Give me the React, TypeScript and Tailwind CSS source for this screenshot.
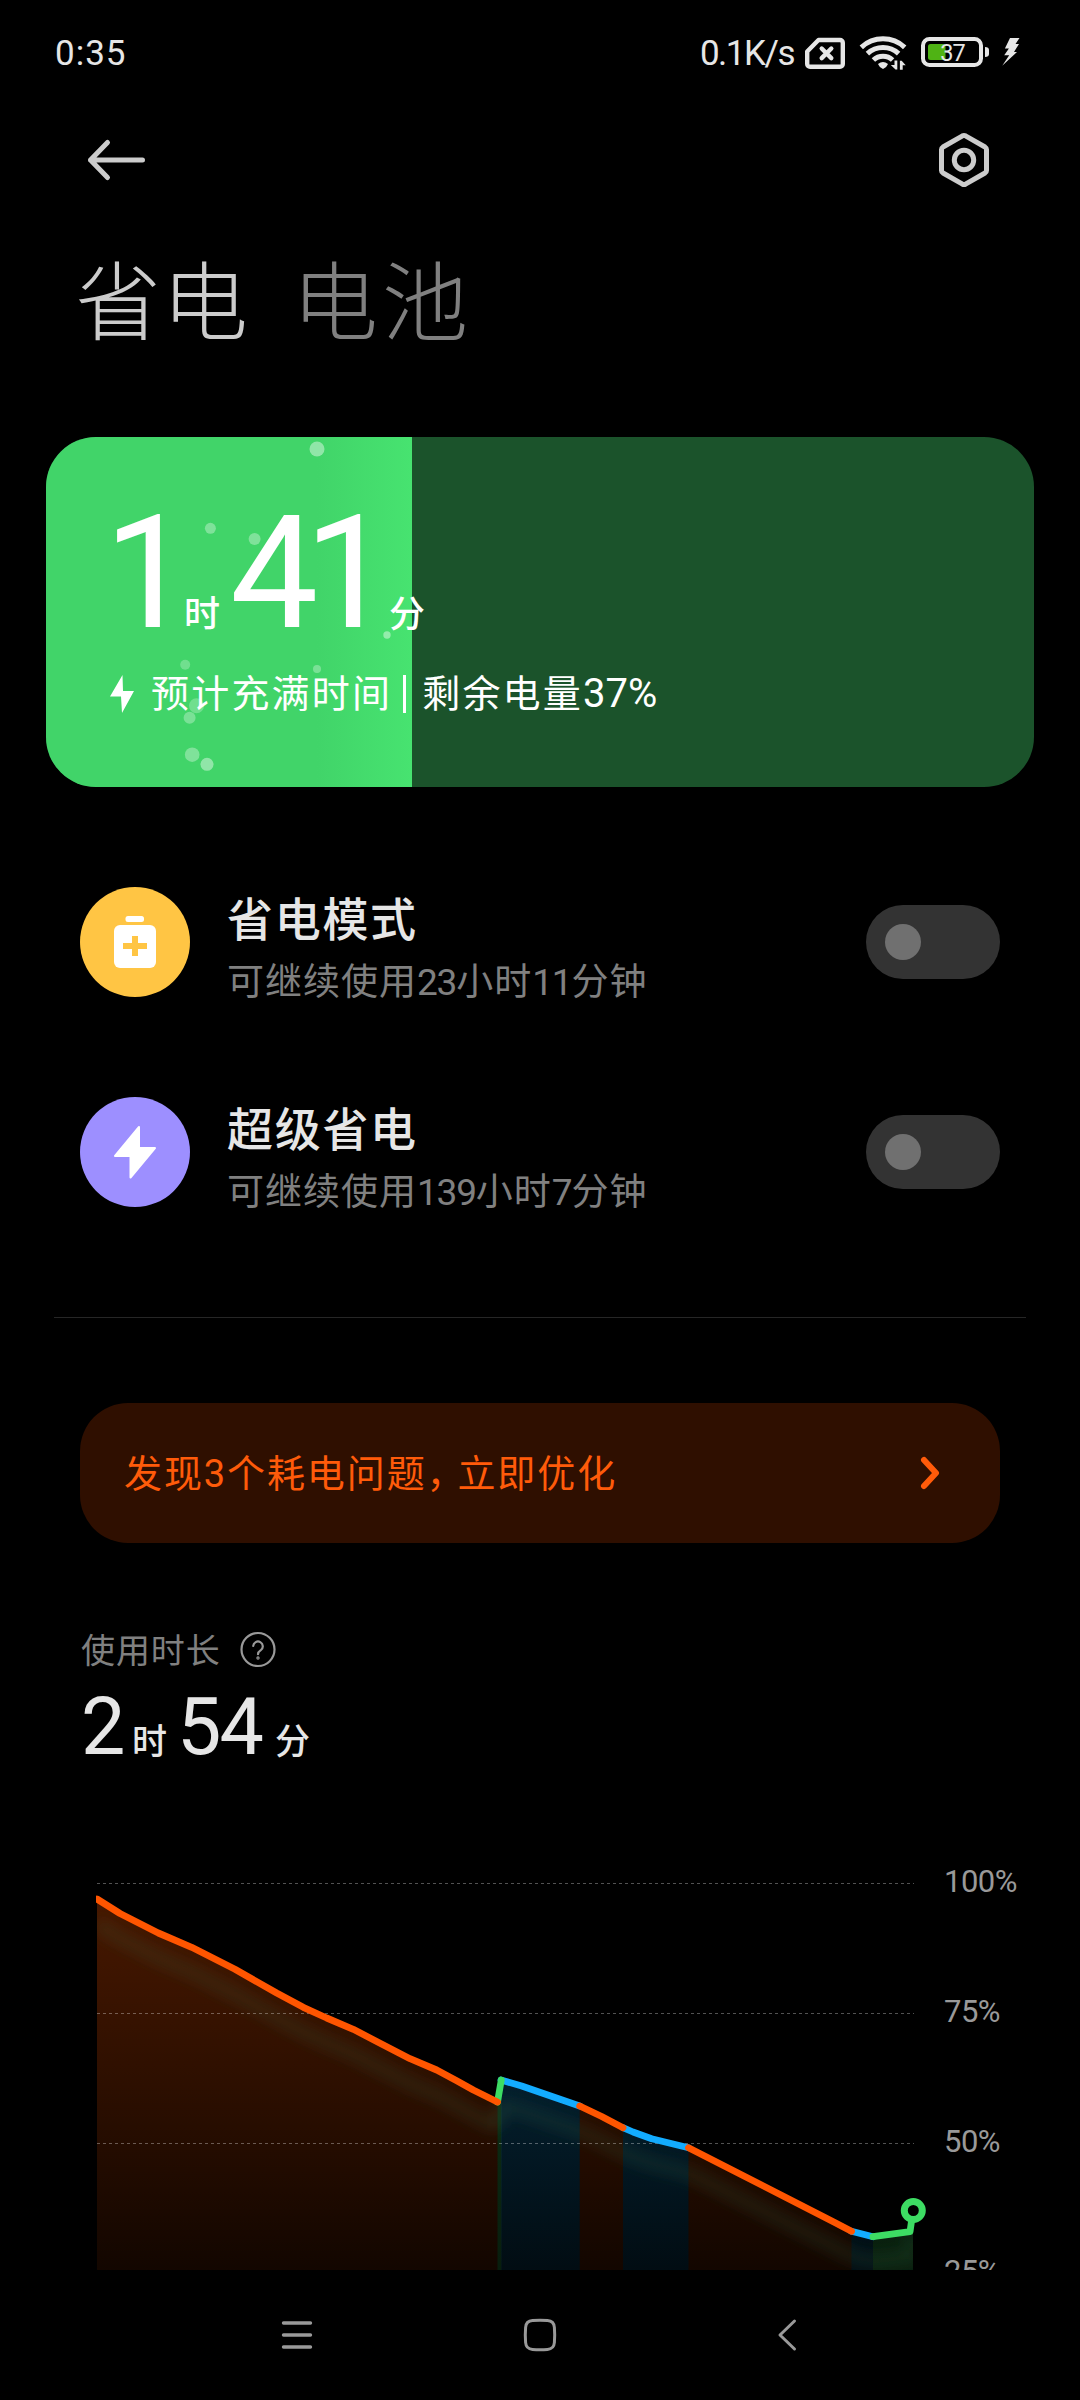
import React from 'react';

type Kind = 'drain' | 'idle' | 'charge';

interface Segment {
  kind: Kind;
  points: [number, number][];
}

const COLORS: Record<Kind, string> = {
  drain: '#ff5500',
  idle: '#13acff',
  charge: '#3ddc63',
};

const SEGMENTS: Segment[] = [
  { kind: 'idle', points: [[501, 2080], [521.7, 2086], [579.7, 2106]] },
  { kind: 'idle', points: [[623, 2127.7], [633, 2132], [651.7, 2138.7], [688.5, 2147.7]] },
  { kind: 'idle', points: [[851.5, 2231.3], [873, 2236.7]] },
  { kind: 'charge', points: [[497.5, 2102], [501.3, 2080]] },
  {
    kind: 'drain',
    points: [
      [97, 1899], [120, 1913.5], [158.3, 1933], [191.7, 1947.3], [235, 1969.3], [276.7, 1993],
      [303.3, 2007.3], [326.7, 2018], [353.3, 2029.3], [376.7, 2041.5], [410, 2058.7],
      [436.7, 2070], [456.7, 2080.7], [473.3, 2090], [497.5, 2102],
    ],
  },
  { kind: 'drain', points: [[579.7, 2106], [601.7, 2116.5], [623, 2127.7]] },
  { kind: 'drain', points: [[688.5, 2147.7], [833.3, 2221.7], [851.5, 2231.3]] },
  { kind: 'charge', points: [[873, 2236.7], [910, 2231.7], [913, 2211]] },
];

const BUBBLES = [
  { x: 271, y: 12, r: 7.5, o: 0.42 },
  { x: 164.4, y: 91.3, r: 5.5, o: 0.33 },
  { x: 208.6, y: 102, r: 6, o: 0.33 },
  { x: 341, y: 198, r: 3.7, o: 0.42 },
  { x: 139.2, y: 227.7, r: 5, o: 0.25 },
  { x: 271, y: 232, r: 4, o: 0.3 },
  { x: 150.5, y: 268.7, r: 7.5, o: 0.25 },
  { x: 143.6, y: 280.7, r: 6, o: 0.3 },
  { x: 146.2, y: 317.7, r: 7.3, o: 0.33 },
  { x: 161, y: 327.3, r: 6.5, o: 0.42 },
];

const toLine = (points: [number, number][]) => points.map((p) => p.join(',')).join(' ');

const toArea = (points: [number, number][]) =>
  `${points[0][0]},2403 ${toLine(points)} ${points[points.length - 1][0]},2403`;

const StatusBar: React.FC = () => (
  <div className="flex h-[105px] items-center pl-[55px] pr-[57px] text-[#e6e6e6]">
    <span className="pt-[2px] text-[35px] leading-none tracking-[1px]">0:35</span>
    <span className="ml-auto pt-[2px] text-[35px] leading-none tracking-[-1.500px]">0.1K/s</span>
    <svg className="ml-[9px] h-[105px] w-[220px]" viewBox="803 0 220 105" fill="none">
      {/* SIM missing */}
      <path d="M818.5 40H840a2.8 2.8 0 0 1 2.8 2.8V64a2.8 2.8 0 0 1-2.8 2.8h-30a2.8 2.8 0 0 1-2.8-2.8V51.5z" stroke="currentColor" strokeWidth="4.4" strokeLinejoin="round" />
      <path d="M821.7 48.5l9.6 9.6m0-9.6l-9.6 9.6" stroke="currentColor" strokeWidth="4.4" strokeLinecap="round" />
      {/* Wi-Fi */}
      <g stroke="currentColor" strokeWidth="5">
        <path d="M861.3 47.3a32 32 0 0 1 43.4 0" />
        <path d="M867.4 53.7a23 23 0 0 1 31.2 0" />
        <path d="M873.4 60a14 14 0 0 1 19.2 0" />
      </g>
      <path d="M878 64q5-4 10 0q-1 3-5 5q-4-2-5-5z" fill="currentColor" />
      <path d="M897.300 60.500v9h-1.800l-4.700-4.500h3.700v-4.500zM899.900 69.800v-9h1.800l4 4.500h-3v4.500z" fill="currentColor" />
      {/* Battery */}
      <rect x="923" y="39" width="58" height="26" rx="6.500" stroke="currentColor" strokeWidth="4" />
      <rect x="928" y="44" width="17.500" height="16" rx="2.500" fill="#4fb314" />
      <path d="M985 47q4 0 4 3v4q0 3-4 3z" fill="currentColor" />
      <text x="940.300" y="61" fill="currentColor" fontSize="23.500" letterSpacing="-1">37</text>
      <path d="M1010 38h9.500l-4 6h3.500l-5 8h3l-14.800 13.700l7-10.400h-5l4.700-6.800h-4z" fill="currentColor" />
    </svg>
  </div>
);

const Hero: React.FC = () => (
  <section className="relative mx-[46px] h-[350px] shrink-0 overflow-hidden rounded-[50px] bg-[#1b532b] text-white">
    <div className="absolute inset-y-0 left-0 w-[37%] bg-[linear-gradient(90deg,#41d469_74%,#47e370_100%)]" />
    <svg className="absolute inset-0" width="988" height="350">
      {BUBBLES.map((b, i) => (
        <circle key={i} cx={b.x} cy={b.y} r={b.r} fill="white" opacity={b.o} />
      ))}
    </svg>
    <div className="relative pl-[58px] pt-[55px]">
      <div className="flex h-[162px] items-baseline leading-[162px]">
        <span className="w-[80px] text-[157px] tracking-[-9px]">1</span>
        <span className="w-[46px] text-[36px] font-medium">时</span>
        <span className="w-[159px] text-[157px] tracking-[-14px]">41</span>
        <span className="text-[36px] font-medium">分</span>
      </div>
      <div className="mt-[10px] flex h-[60px] items-center pl-[6px]">
        <svg width="24" height="38" viewBox="0 0 24 38" fill="currentColor">
          <path d="M12.500 0L0 21.500h11L12 38l12-22H13z" />
        </svg>
        <span className="ml-[17px] text-[38px] tracking-[2.200px]">预计充满时间</span>
        <span className="ml-[11px] h-[38px] w-[3px] bg-white" />
        <span className="ml-[16px] text-[38px] tracking-[2.200px]">剩余电量</span>
        <span className="text-[40px]">37%</span>
      </div>
    </div>
  </section>
);

interface ModeRowProps {
  title: string;
  detail: string;
  badgeClass: string;
  icon: React.ReactNode;
}

const ModeRow: React.FC<ModeRowProps> = ({ title, detail, badgeClass, icon }) => (
  <div className="flex h-[110px] items-center px-20">
    <div className={`h-[110px] w-[110px] shrink-0 rounded-full ${badgeClass}`}>{icon}</div>
    <div className="ml-[37px] flex-1 pt-[17px]">
      <div className="h-[63px] text-[46px] font-medium leading-[62px] tracking-[1.700px] text-[#e6e6e6]">{title}</div>
      <div className="h-[61px] text-[37px] leading-[61px] tracking-[1px] text-[#808080]">
        {detail.split(/(\d+)/).map((part, i) => (
          <span key={i} className={i % 2 ? 'tracking-[-1.200px]' : ''}>{part}</span>
        ))}
      </div>
    </div>
    <button className="flex h-[74px] w-[134px] items-center rounded-full bg-[#333333] pl-[19px]">
      <span className="h-9 w-9 rounded-full bg-[#707070]" />
    </button>
  </div>
);

const Chart: React.FC = () => (
  <svg className="block shrink-0" width="1080" height="430" viewBox="0 1840 1080 430">
    <defs>
      {(Object.keys(COLORS) as Kind[]).map((kind) => (
        <linearGradient key={kind} id={kind} gradientUnits="userSpaceOnUse" x1="0" x2="0" y1="1899" y2="2403">
          <stop offset="0" stopColor={COLORS[kind]} stopOpacity="0.28" />
          <stop offset="1" stopColor={COLORS[kind]} stopOpacity={kind === 'charge' ? 0.08 : 0} />
        </linearGradient>
      ))}
      <filter id="glow" filterUnits="userSpaceOnUse" x="60" y="1840" width="900" height="470">
        <feGaussianBlur stdDeviation="6.500" />
      </filter>
      <clipPath id="area">
        {SEGMENTS.map((s, i) => <polygon key={i} points={toArea(s.points)} />)}
      </clipPath>
    </defs>
    {SEGMENTS.map((s, i) => <polygon key={i} points={toArea(s.points)} fill={`url(#${s.kind})`} />)}
    <g clipPath="url(#area)">
      <g filter="url(#glow)" transform="translate(0 25)" fill="none" stroke="#406e46" strokeOpacity="0.17" strokeWidth="15">
        {SEGMENTS.map((s, i) => <polyline key={i} points={toLine(s.points)} />)}
      </g>
    </g>
    {[1883.5, 2013.5, 2143.5].map((y) => (
      <line key={y} x1="97" x2="914" y1={y} y2={y} stroke="white" strokeOpacity="0.32" strokeDasharray="3 3" />
    ))}
    <g fill="none" strokeWidth="6.800" strokeLinecap="round" strokeLinejoin="round">
      {SEGMENTS.map((s, i) => <polyline key={i} points={toLine(s.points)} stroke={COLORS[s.kind]} />)}
    </g>
    <rect x="88" y="1885" width="8" height="30" fill="black" />
    <circle cx="913.300" cy="2210.500" r="9" fill="black" stroke="#3ddc63" strokeWidth="7" />
    <g fill="#999999" fontSize="31" letterSpacing="-0.500">
      <text x="944" y="1892">100%</text>
      <text x="944" y="2022">75%</text>
      <text x="944" y="2152">50%</text>
      <text x="944" y="2282">25%</text>
    </g>
  </svg>
);

const App: React.FC = () => {
  return (
    <div lang="zh-CN" className="flex h-[2400px] w-[1080px] flex-col overflow-hidden bg-black font-['Roboto','Noto_Sans_CJK_SC',sans-serif]">
      <StatusBar />

      <header className="flex h-[110px] items-center justify-between pl-[86px] pr-[89px] text-[#cccccc]">
        <svg width="60" height="44" viewBox="0 0 60 44" fill="none" stroke="currentColor" strokeWidth="5" strokeLinecap="round" strokeLinejoin="round">
          <path d="M56.500 22H4.500M21.500 4.500L4.500 22l17 17.500" />
        </svg>
        <svg width="54" height="58" viewBox="0 0 54 58" fill="none" stroke="currentColor" strokeWidth="5" strokeLinejoin="round">
          <path d="M25.500 4.800q1.500-.8 3 0L48 16q1.500 1 1.500 2.500v21Q49.500 41 48 42L28.500 53.200q-1.500.8-3 0L6 42q-1.500-1-1.500-2.500v-21Q4.500 17 6 16z" />
          <circle cx="27" cy="29" r="9.700" />
        </svg>
      </header>

      <nav className="flex h-[222px] pl-[75px] pt-[6px] text-[86px] font-light leading-[168px]">
        <span className="w-[217px] tracking-[1px] text-[#cccccc]">省电</span>
        <span className="tracking-[4px] text-[#808080]">电池</span>
      </nav>

      <Hero />

      <div className="mt-[100px] flex flex-col gap-[100px]">
        <ModeRow
          title="省电模式"
          detail="可继续使用23小时11分钟"
          badgeClass="bg-[#ffc544]"
          icon={
            <svg width="110" height="110" fill="white">
              <rect x="45.500" y="29" width="18.500" height="6" rx="2.500" />
              <rect x="34" y="38" width="42" height="43" rx="6" />
              <path d="M55 49v20M43 59h24" stroke="#ffc544" strokeWidth="6" />
            </svg>
          }
        />
        <ModeRow
          title="超级省电"
          detail="可继续使用139小时7分钟"
          badgeClass="bg-[#9d8fff]"
          icon={
            <svg width="110" height="110" fill="white" stroke="white" strokeWidth="2" strokeLinejoin="round">
              <path d="M59 30L35 59h15.500v21.500L75 51H59z" />
            </svg>
          }
        />
      </div>

      <div className="mx-[54px] mt-[110px] h-px shrink-0 bg-[#262626]" />

      <div className="mx-20 mt-[85px] flex h-[140px] shrink-0 items-center justify-between rounded-[48px] bg-[#2f0f00] pl-[44px] pr-[57px] text-[#ff5b0a]">
        <span className="pt-[2px] text-[38px] tracking-[1.900px]">
          发现3个耗电问题<span className="mr-[10px] [font-feature-settings:'halt']">，</span>立即优化
        </span>
        <svg width="24" height="38" viewBox="0 0 24 38" fill="none" stroke="currentColor" strokeWidth="6" strokeLinecap="round" strokeLinejoin="round">
          <path d="M5 6l12 13L5 32" />
        </svg>
      </div>

      <section className="mt-[76px] h-[221px] shrink-0 pl-[81px]">
        <div className="flex h-[60px] items-center">
          <span className="pt-[4px] text-[34px] tracking-[0.900px] text-[#808080]">使用时长</span>
          <svg className="ml-[18px]" width="38" height="38" viewBox="0 0 38 38" fill="none" stroke="#999999" strokeWidth="2.200" strokeLinecap="round">
            <circle cx="19" cy="19.500" r="16.500" />
            <path d="M14.200 16a4.800 4.800 0 1 1 7.600 4.200q-2.800 1.900-2.800 4" />
            <circle cx="19" cy="28" r="0.600" />
          </svg>
        </div>
        <div className="flex h-[90px] items-baseline pt-[3px] leading-[90px] text-[#e6e6e6]">
          <span className="w-[51px] text-[79px] tracking-[-3px]">2</span>
          <span className="w-[45px] text-[35px] font-medium">时</span>
          <span className="w-[98px] text-[79px] tracking-[-2px]">54</span>
          <span className="text-[35px] font-medium">分</span>
        </div>
      </section>

      <Chart />

      <footer className="flex h-[130px] items-center pl-[279px] text-[#999999]">
        <svg width="36" height="36" viewBox="0 0 36 36" stroke="currentColor" strokeWidth="3.400" strokeLinecap="round">
          <path d="M4.500 6h27M4.500 18h27M4.500 30h27" />
        </svg>
        <svg className="ml-[207px]" width="36" height="36" viewBox="0 0 36 36" fill="none" stroke="currentColor" strokeWidth="3">
          <path d="M10.500 3.600Q18 3 25.500 3.600Q31.900 4 32.400 10.500Q33 18 32.400 25.500Q31.900 32 25.500 32.400Q18 33 10.500 32.400Q4.100 32 3.600 25.500Q3 18 3.600 10.500Q4.100 4 10.500 3.600z" />
        </svg>
        <svg className="ml-[218px]" width="24" height="36" viewBox="0 0 24 36" fill="none" stroke="currentColor" strokeWidth="3" strokeLinecap="round" strokeLinejoin="round">
          <path d="M18.500 4L4 18l14.500 14" />
        </svg>
      </footer>
    </div>
  );
};

export default App;
